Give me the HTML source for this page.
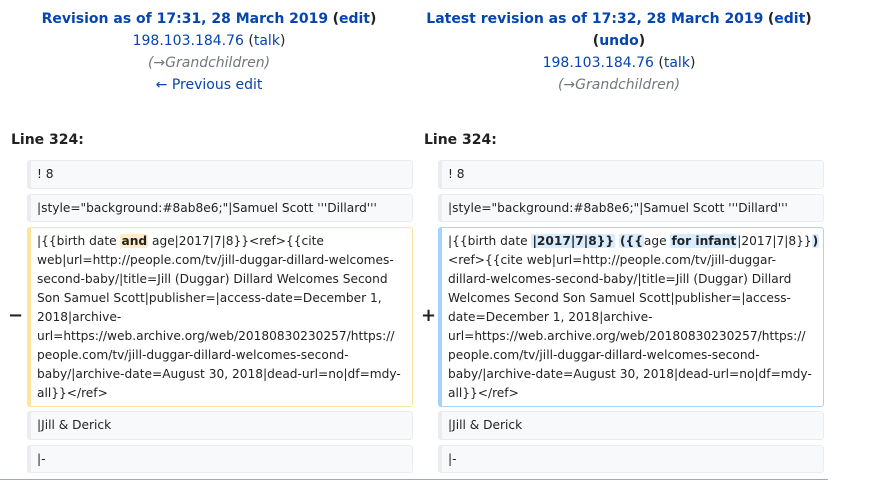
<!DOCTYPE html>
<html><head><meta charset="utf-8"><style>
body{margin:0;width:874px;height:496px;background:#fff;font-family:"DejaVu Sans","Liberation Sans",sans-serif;color:#222;position:relative;overflow:hidden}
.h{position:absolute;width:410px;text-align:center;font-size:14px;line-height:22px}
.h b{color:#0645ad}
a{color:#0645ad;text-decoration:none}
.g{color:#72777d;font-style:italic}
.ln{position:absolute;top:132px;font-weight:bold;font-size:14px}
.box{position:absolute;box-sizing:border-box;border:1px solid #eaecf0;border-left:4px solid #eaecf0;background:#f8f9fa;border-radius:3px;font-size:12.2px;line-height:19px;padding:4px 0 0 6px;white-space:nowrap}
.del{background:#fff;border-color:#ffe49c}
.add{background:#fff;border-color:#a3d3ff}
.dm{background:#feeec8;font-weight:bold;border-radius:2px;padding:0 1px}
.am{background:#d8ecff;font-weight:bold;border-radius:2px;padding:0 1px}
.sg{position:absolute;font-weight:bold;font-size:18px}
.hr{position:absolute;left:0;top:479px;width:828px;height:1px;background:#a2a9b1}
</style></head><body>
<div class="h" style="left:4px;top:8px"><b>Revision as of 17:31, 28 March 2019</b> <b style="color:#222">(<a>edit</a>)</b><br><a>198.103.184.76</a> (<a>talk</a>)<br><span class="g">(→Grandchildren)</span><br><a>← Previous edit</a></div>
<div class="h" style="left:414px;top:8px"><b>Latest revision as of 17:32, 28 March 2019</b> <b style="color:#222">(<a>edit</a>)</b><br><b style="color:#222">(<a>undo</a>)</b><br><a>198.103.184.76</a> (<a>talk</a>)<br><span class="g">(→Grandchildren)</span></div>
<div class="ln" style="left:11px">Line 324:</div>
<div class="ln" style="left:424px">Line 324:</div>

<div class="box" style="left:27px;top:160px;width:386px;height:29px">! 8</div>
<div class="box" style="left:27px;top:194px;width:386px;height:28px">|style="background:#8ab8e6;"|Samuel Scott '''Dillard'''</div>
<div class="box del" style="left:27px;top:227px;width:386px;height:180px">|{{birth date <span class="dm">and</span> age|2017|7|8}}&lt;ref&gt;{{cite<br>web|url=http://people.com/tv/jill-duggar-dillard-welcomes-<br>second-baby/|title=Jill (Duggar) Dillard Welcomes Second<br>Son Samuel Scott|publisher=|access-date=December 1,<br>2018|archive-<br>url=https://web.archive.org/web/20180830230257/https://<br>people.com/tv/jill-duggar-dillard-welcomes-second-<br>baby/|archive-date=August 30, 2018|dead-url=no|df=mdy-<br>all}}&lt;/ref&gt;</div>
<div class="box" style="left:27px;top:411px;width:386px;height:29px">|Jill &amp; Derick</div>
<div class="box" style="left:27px;top:445px;width:386px;height:28px">|-</div>
<div class="sg" style="left:8px;top:305px">−</div>

<div class="box" style="left:438px;top:160px;width:386px;height:29px">! 8</div>
<div class="box" style="left:438px;top:194px;width:386px;height:28px">|style="background:#8ab8e6;"|Samuel Scott '''Dillard'''</div>
<div class="box add" style="left:438px;top:227px;width:386px;height:180px">|{{birth date <span class="am">|2017|7|8}}</span> <span class="am">({{</span>age <span class="am">for infant</span>|2017|7|8}}<span class="am">)</span><br>&lt;ref&gt;{{cite web|url=http://people.com/tv/jill-duggar-<br>dillard-welcomes-second-baby/|title=Jill (Duggar) Dillard<br>Welcomes Second Son Samuel Scott|publisher=|access-<br>date=December 1, 2018|archive-<br>url=https://web.archive.org/web/20180830230257/https://<br>people.com/tv/jill-duggar-dillard-welcomes-second-<br>baby/|archive-date=August 30, 2018|dead-url=no|df=mdy-<br>all}}&lt;/ref&gt;</div>
<div class="box" style="left:438px;top:411px;width:386px;height:29px">|Jill &amp; Derick</div>
<div class="box" style="left:438px;top:445px;width:386px;height:28px">|-</div>
<div class="sg" style="left:421px;top:305px">+</div>
<div class="hr"></div>
</body></html>
